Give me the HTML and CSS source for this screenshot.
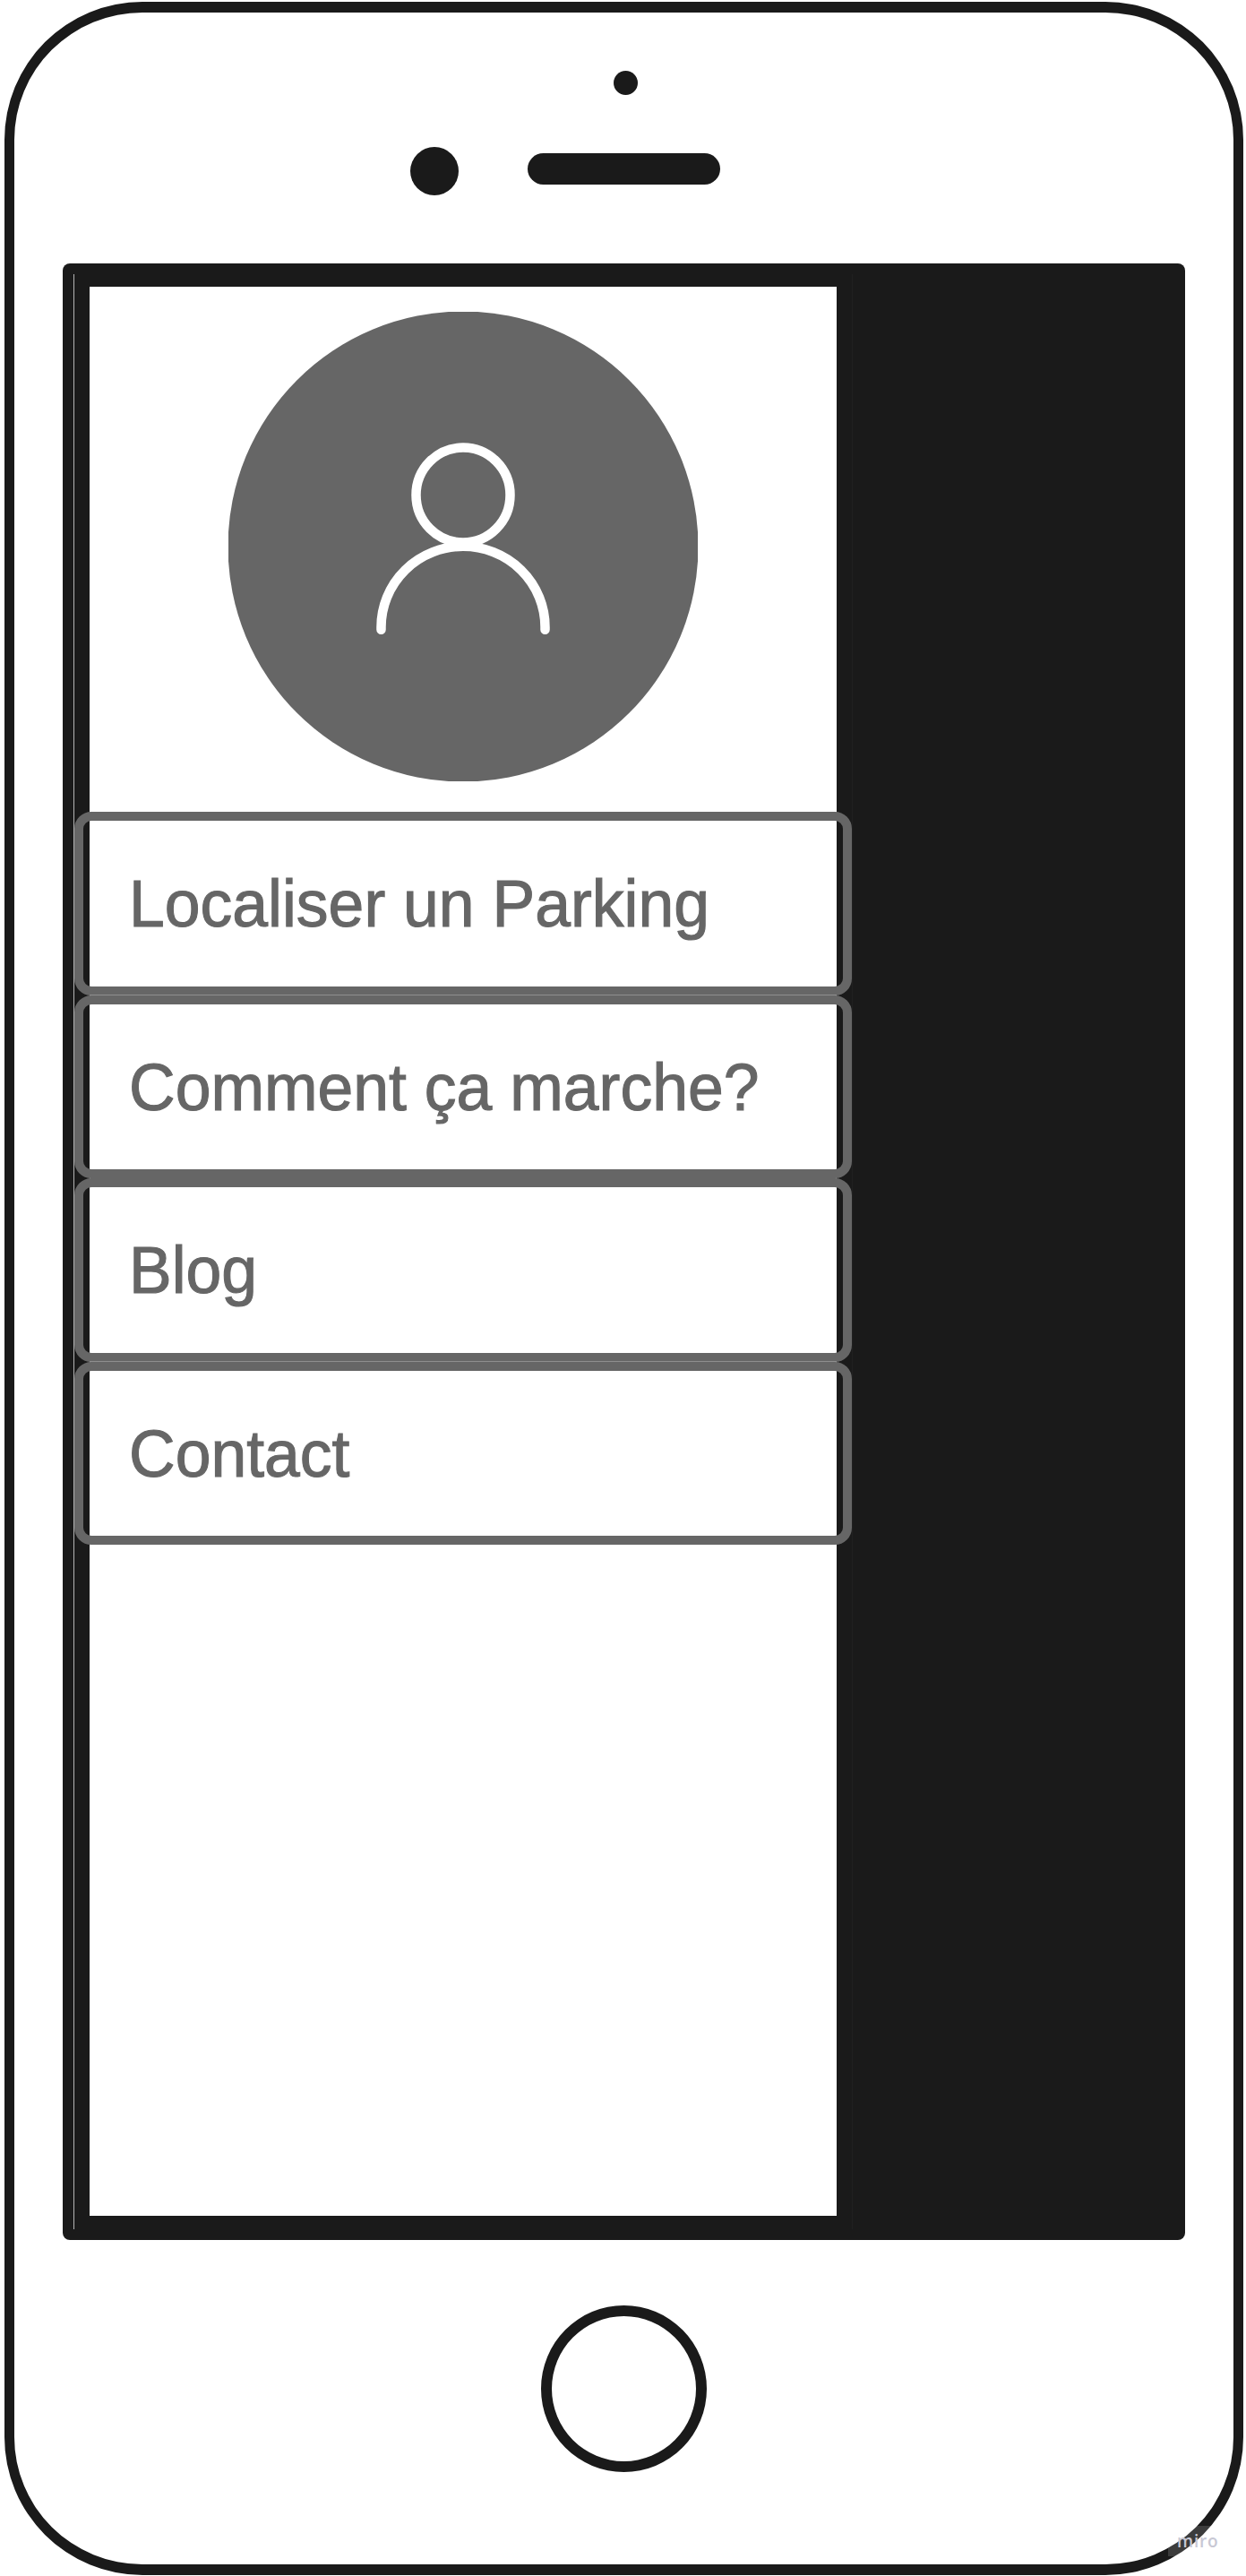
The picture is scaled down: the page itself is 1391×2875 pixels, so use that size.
FILE: index.html
```html
<!DOCTYPE html>
<html lang="fr">
<head>
<meta charset="utf-8">
<title>Menu</title>
<link rel="stylesheet" href="styles.css">
</head>
<body>
<div class="phone">
  <header class="top">
    <span class="sensor"></span>
    <div class="row"><span class="camera"></span><span class="speaker"></span></div>
  </header>
  <main class="screen">
    <div class="edge"></div>
    <section class="drawer">
      <div class="panel">
        <svg class="avatar" viewBox="0 0 524 524" aria-label="Profil">
          <circle cx="262" cy="262" r="262.500" fill="#666"/>
          <g fill="none" stroke="#fff" stroke-width="10.500" stroke-linecap="round">
            <ellipse cx="262" cy="204.500" rx="52.500" ry="53"/>
            <path d="M170.500 354.700v-2.900a91.500 90 0 0 1 183 0v2.900"/>
          </g>
        </svg>
      </div>
      <nav class="menu">
        <a class="item tall"><span class="label">Localiser un Parking</span></a>
        <a class="item"><span class="label">Comment ça marche?</span></a>
        <a class="item tall"><span class="label">Blog</span></a>
        <a class="item"><span class="label">Contact</span></a>
      </nav>
    </section>
  </main>
  <footer class="bottom"><span class="home"></span></footer>
  <div class="mark">miro</div>
</div>
</body>
</html>
```
FILE: styles.css
```css
* { box-sizing: border-box; }
body { margin: 0; background: #fff; font-family: "Liberation Sans", Arial, sans-serif; }
.phone {
  position: relative;
  width: 1383px;
  height: 2872px;
  margin: 2px 0 0 5px;
  border: solid #1a1a1a;
  border-width: 12px 11px;
  border-radius: 154px;
}
.top { height: 280px; padding-top: 65px; }
.sensor { display: block; width: 27px; height: 27px; margin-left: 669px; border-radius: 50%; background: #1a1a1a; }
.row { display: flex; align-items: center; gap: 77px; margin: 57px 0 0 442px; height: 56px; }
.camera { width: 54px; height: 54px; border-radius: 50%; background: #1a1a1a; }
.speaker { width: 215px; height: 35px; margin-bottom: 5px; border-radius: 18px; background: #1a1a1a; }
.screen {
  display: flex;
  width: 1253px;
  height: 2206px;
  margin-left: 54px;
  padding: 12px 0 12px 12px;
  border-radius: 8px;
  background: #1a1a1a;
}
.edge { width: 1px; background: #b4b4b4; }
.drawer { width: 869px; border-right: 1px solid #202020; padding-top: 14px; }
.panel { width: 834px; height: 2153px; margin-left: 17px; padding: 28px 0 0 155px; background: #fff; }
.avatar { display: block; width: 524px; height: 524px; }
.menu { position: relative; width: 868px; margin-top: -1567px; }
.item {
  position: relative;
  display: flex;
  align-items: center;
  height: 204px;
  padding: 1px 0 0 51px;
  border: 10px solid #666;
  border-radius: 19px;
  color: #666;
  font-size: 73.5px;
  line-height: 84px;
  white-space: nowrap;
}
.item.tall { height: 205px; }
/* hairline between a tall item and the next one */
.item.tall::after {
  content: "";
  position: absolute;
  left: 7px;
  right: 7px;
  bottom: -10px;
  height: 1px;
  background: #8e8e8e;
}
.label { transform: scaleX(.973); transform-origin: left; -webkit-text-stroke: 1.1px #666; }
.bottom { display: flex; padding: 73px 0 0 588px; }
.home { width: 185px; height: 186px; border: 12px solid #1a1a1a; border-radius: 50%; }
.mark {
  position: absolute;
  left: 1288px;
  top: 2805px;
  width: 67px;
  height: 34px;
  padding-left: 10px;
  background: rgba(255, 255, 255, .15);
  color: #c8c8d4;
  font: 600 19px/34px "Open Sans", sans-serif;
  letter-spacing: .8px;
}
```
